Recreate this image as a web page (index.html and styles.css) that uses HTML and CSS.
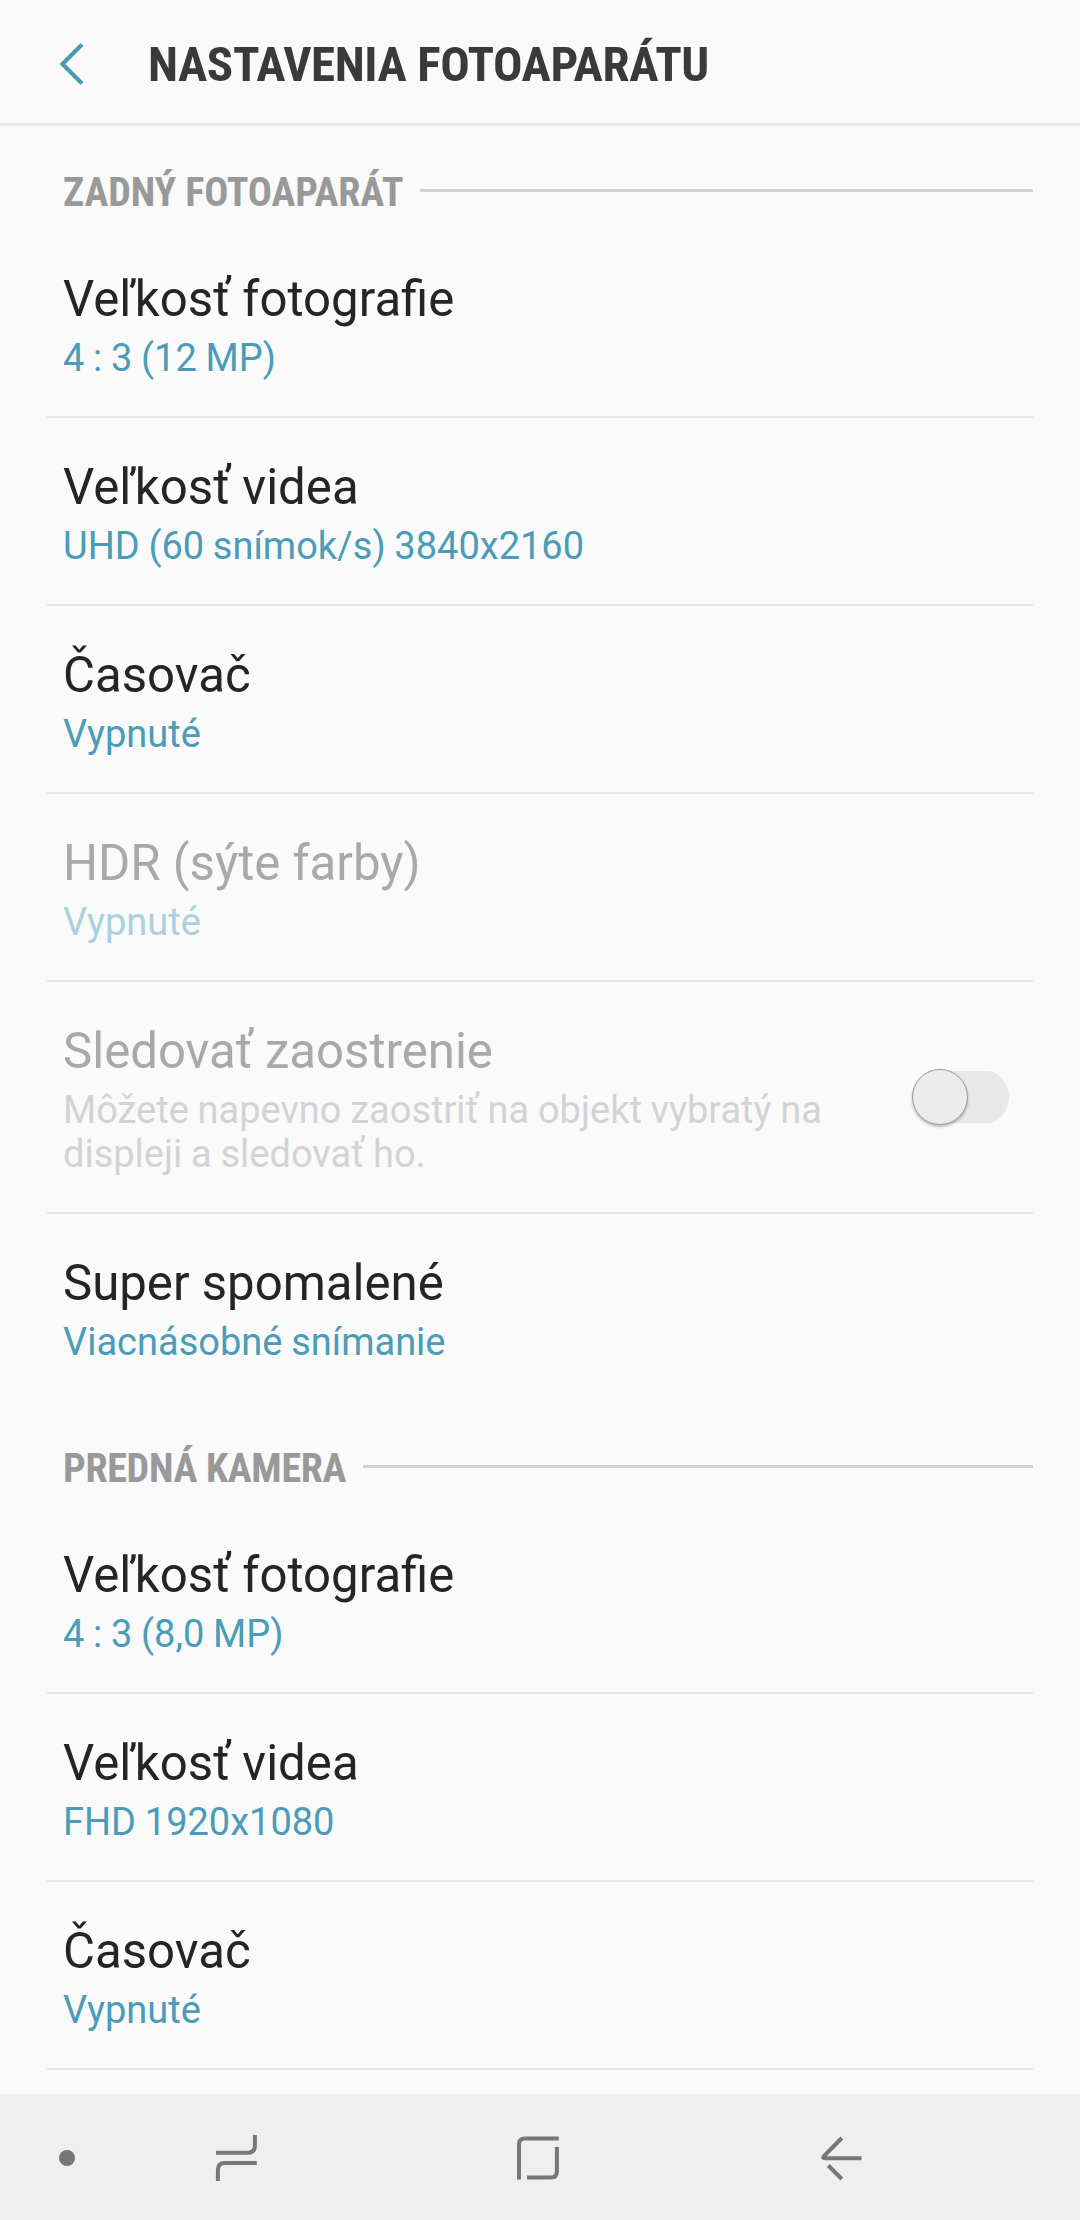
FILE: index.html
```html
<!DOCTYPE html>
<html lang="sk">
<head>
<meta charset="utf-8">
<title>Nastavenia fotoaparátu</title>
<link rel="stylesheet" href="styles.css">
</head>
<body>
<div class="screen">
  <header class="app-bar">
    <svg class="up-icon" width="28" height="46" viewBox="0 0 28 46"><path d="M26 3.500 6.500 23 26 42.500"/></svg>
    <h1 class="app-title">NASTAVENIA FOTOAPARÁTU</h1>
  </header>
  <main class="content">
    <section>
      <div class="section-head"><h2 class="section-title">ZADNÝ FOTOAPARÁT</h2><span class="rule"></span></div>
      <div class="row"><div class="label"><div class="title">Veľkosť fotografie</div><div class="value">4 : 3 (12 MP)</div></div></div>
      <div class="row"><div class="label"><div class="title">Veľkosť videa</div><div class="value">UHD (60 snímok/s) 3840x2160</div></div></div>
      <div class="row"><div class="label"><div class="title">Časovač</div><div class="value">Vypnuté</div></div></div>
      <div class="row disabled"><div class="label"><div class="title">HDR (sýte farby)</div><div class="value">Vypnuté</div></div></div>
      <div class="row disabled"><div class="label"><div class="title">Sledovať zaostrenie</div><div class="value description">Môžete napevno zaostriť na objekt vybratý na<br>displeji a sledovať ho.</div></div><span class="switch"><span class="thumb"></span></span></div>
      <div class="row last"><div class="label"><div class="title">Super spomalené</div><div class="value">Viacnásobné snímanie</div></div></div>
    </section>
    <section>
      <div class="section-head"><h2 class="section-title tight">PREDNÁ KAMERA</h2><span class="rule"></span></div>
      <div class="row"><div class="label"><div class="title">Veľkosť fotografie</div><div class="value">4 : 3 (8,0 MP)</div></div></div>
      <div class="row"><div class="label"><div class="title">Veľkosť videa</div><div class="value">FHD 1920x1080</div></div></div>
      <div class="row"><div class="label"><div class="title">Časovač</div><div class="value">Vypnuté</div></div></div>
    </section>
  </main>
  <nav class="nav-bar">
    <span class="dot"></span>
    <svg class="nav-icon recents" width="48" height="48" viewBox="0 0 48 48"><path d="M4 18.700H36Q42.900 18.700 42.900 11.800V1M44.800 29H12.800Q5.900 29 5.900 35.900V47"/></svg>
    <svg class="nav-icon home" width="48" height="48" viewBox="0 0 48 48"><path d="M5 45.500V10.500Q5 4.500 11 4.500H44.800M42.900 13V37.500Q42.900 43.500 36.900 43.500H13"/></svg>
    <svg class="nav-icon back" width="48" height="48" viewBox="0 0 48 48"><path d="M25.800 4 8.200 21.800C6.200 24 7.500 24.200 9.500 24.200H45.500M12.300 31.500 25.800 45"/></svg>
  </nav>
</div>
</body>
</html>
```
FILE: styles.css
```css
* { box-sizing: border-box; }
body { margin: 0; background: #fafafa; font-family: Roboto, "Liberation Sans", sans-serif; }
h1, h2 { margin: 0; }
.screen { width: 1080px; height: 2220px; display: flex; flex-direction: column; overflow: hidden; }
.app-bar { height: 126px; flex: none; display: flex; align-items: center; padding: 4px 0 0 56px; border-bottom: 3px solid #e6e6e6; }
.up-icon { flex: none; fill: none; stroke: #4a9cb8; stroke-width: 4.2; }
.app-title { margin: 2px 0 0 64px; font: 700 49px/58px "Roboto Condensed", Roboto, sans-serif; font-stretch: condensed; letter-spacing: -0.41px; color: #3a3a3a; white-space: nowrap; }
.content { height: 1968px; flex: none; overflow: hidden; padding: 0 47px; }
.section-head { height: 104px; display: flex; align-items: flex-start; padding: 43px 0 0 16px; }
.section-title { font: 700 40px/48px "Roboto Condensed", Roboto, sans-serif; font-stretch: condensed; letter-spacing: -0.08px; color: #999; white-space: nowrap; }
.section-title.tight { letter-spacing: -0.3px; }
.rule { flex: 1; height: 3px; margin: 20px 0 0 17px; background: #d2d2d2; }
.row { display: flex; justify-content: space-between; align-items: center; padding: 40px 24px 36px 16px; border-bottom: 2px solid #e5e5e5; }
.last { border-color: transparent; }
.title { font-size: 49.15px; line-height: 58px; color: #252525; white-space: nowrap; }
.value { margin-top: 8px; font-size: 38px; line-height: 44px; word-spacing: -0.7px; color: #4a9cb8; white-space: nowrap; }
.disabled .title { color: #a9a9a9; }
.disabled .value { color: #abd1de; }
.disabled .description { color: #d3d3d3; }
.switch { width: 97px; height: 56px; margin-bottom: 4px; flex: none; display: flex; align-items: center; background: linear-gradient(#e8e8e8, #e8e8e8) right center / 69px 52px no-repeat; border-radius: 28px; }
.thumb { width: 56px; height: 56px; border-radius: 50%; background: #ebebeb; border: 1px solid #999; box-shadow: 0 2px 3px rgba(0, 0, 0, .25); }
.nav-bar { height: 126px; flex: none; display: flex; align-items: center; background: #efefef; padding: 2px 0 0 59px; }
.dot { width: 16px; height: 16px; border-radius: 50%; background: #777; }
.nav-icon { flex: none; fill: none; stroke: #777; stroke-width: 4; }
.recents { margin-left: 137px; }
.home { margin-left: 254px; }
.back { margin-left: 254px; }
```
